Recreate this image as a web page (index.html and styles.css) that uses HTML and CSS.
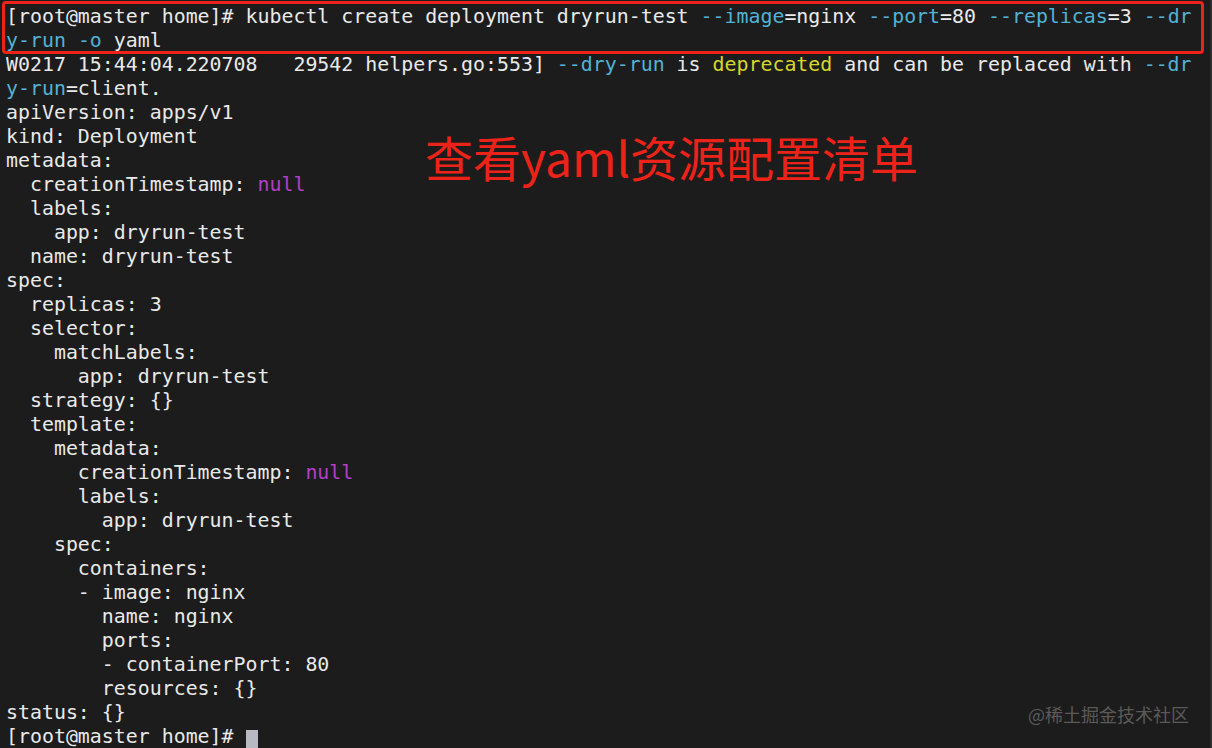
FILE: index.html
```html
<!DOCTYPE html>
<html lang="zh">
<head>
<meta charset="utf-8">
<title>kubectl dry-run</title>
<link rel="stylesheet" href="styles.css">
</head>
<body>
<div class="term">
<pre class="out">[root@master home]# kubectl create deployment dryrun-test <span class="c">--image</span>=nginx <span class="c">--port</span>=80 <span class="c">--replicas</span>=3 <span class="c">--dr</span>
<span class="c">y-run</span> <span class="c">-o</span> yaml
W0217 15:44:04.220708   29542 helpers.go:553] <span class="c">--dry-run</span> is <span class="y">deprecated</span> and can be replaced with <span class="c">--dr</span>
<span class="c">y-run</span>=client.
apiVersion: apps/v1
kind: Deployment
metadata:
  creationTimestamp: <span class="p">null</span>
  labels:
    app: dryrun-test
  name: dryrun-test
spec:
  replicas: 3
  selector:
    matchLabels:
      app: dryrun-test
  strategy: {}
  template:
    metadata:
      creationTimestamp: <span class="p">null</span>
      labels:
        app: dryrun-test
    spec:
      containers:
      - image: nginx
        name: nginx
        ports:
        - containerPort: 80
        resources: {}
status: {}
[root@master home]# <span class="cursor"> </span></pre>
<div class="box"></div>
<div class="note">查看yaml资源配置清单</div>
<div class="mark">@稀土掘金技术社区</div>
</div>
</body>
</html>
```

FILE: styles.css
```css
html, body {
  margin: 0;
  padding: 0;
  background: #1c1c1c;
}
.term {
  position: relative;
  width: 1210px;
  height: 748px;
  background: #1c1c1c;
  border-right: 2px solid #2c2c2c;
  overflow: hidden;
}
.out {
  margin: 0;
  padding: 5px 6px 4px;
  font-family: "DejaVu Sans Mono", "Liberation Mono", monospace;
  font-size: 19.9px;
  line-height: 24px;
  color: #e9e9e9;
  white-space: pre;
}
.c { color: #52b2d6; }
.y { color: #d6d62e; }
.p { color: #b23fc4; }
.cursor {
  display: inline-block;
  width: 12px;
  height: 22px;
  vertical-align: -5px;
  background: #b9b9c2;
}
.box {
  position: absolute;
  left: 2px;
  top: 1px;
  width: 1196px;
  height: 47px;
  border: 3px solid #ec2318;
  border-radius: 4px;
}
.note {
  position: absolute;
  left: 425px;
  top: 126px;
  font-family: "Microsoft YaHei", "Noto Sans CJK SC", sans-serif;
  font-size: 48px;
  line-height: 60px;
  color: #ec2318;
}
.mark {
  position: absolute;
  left: 1028px;
  top: 702px;
  font-family: "Noto Sans CJK SC", sans-serif;
  font-size: 18px;
  line-height: 24px;
  color: #5a5a5a;
}
```
